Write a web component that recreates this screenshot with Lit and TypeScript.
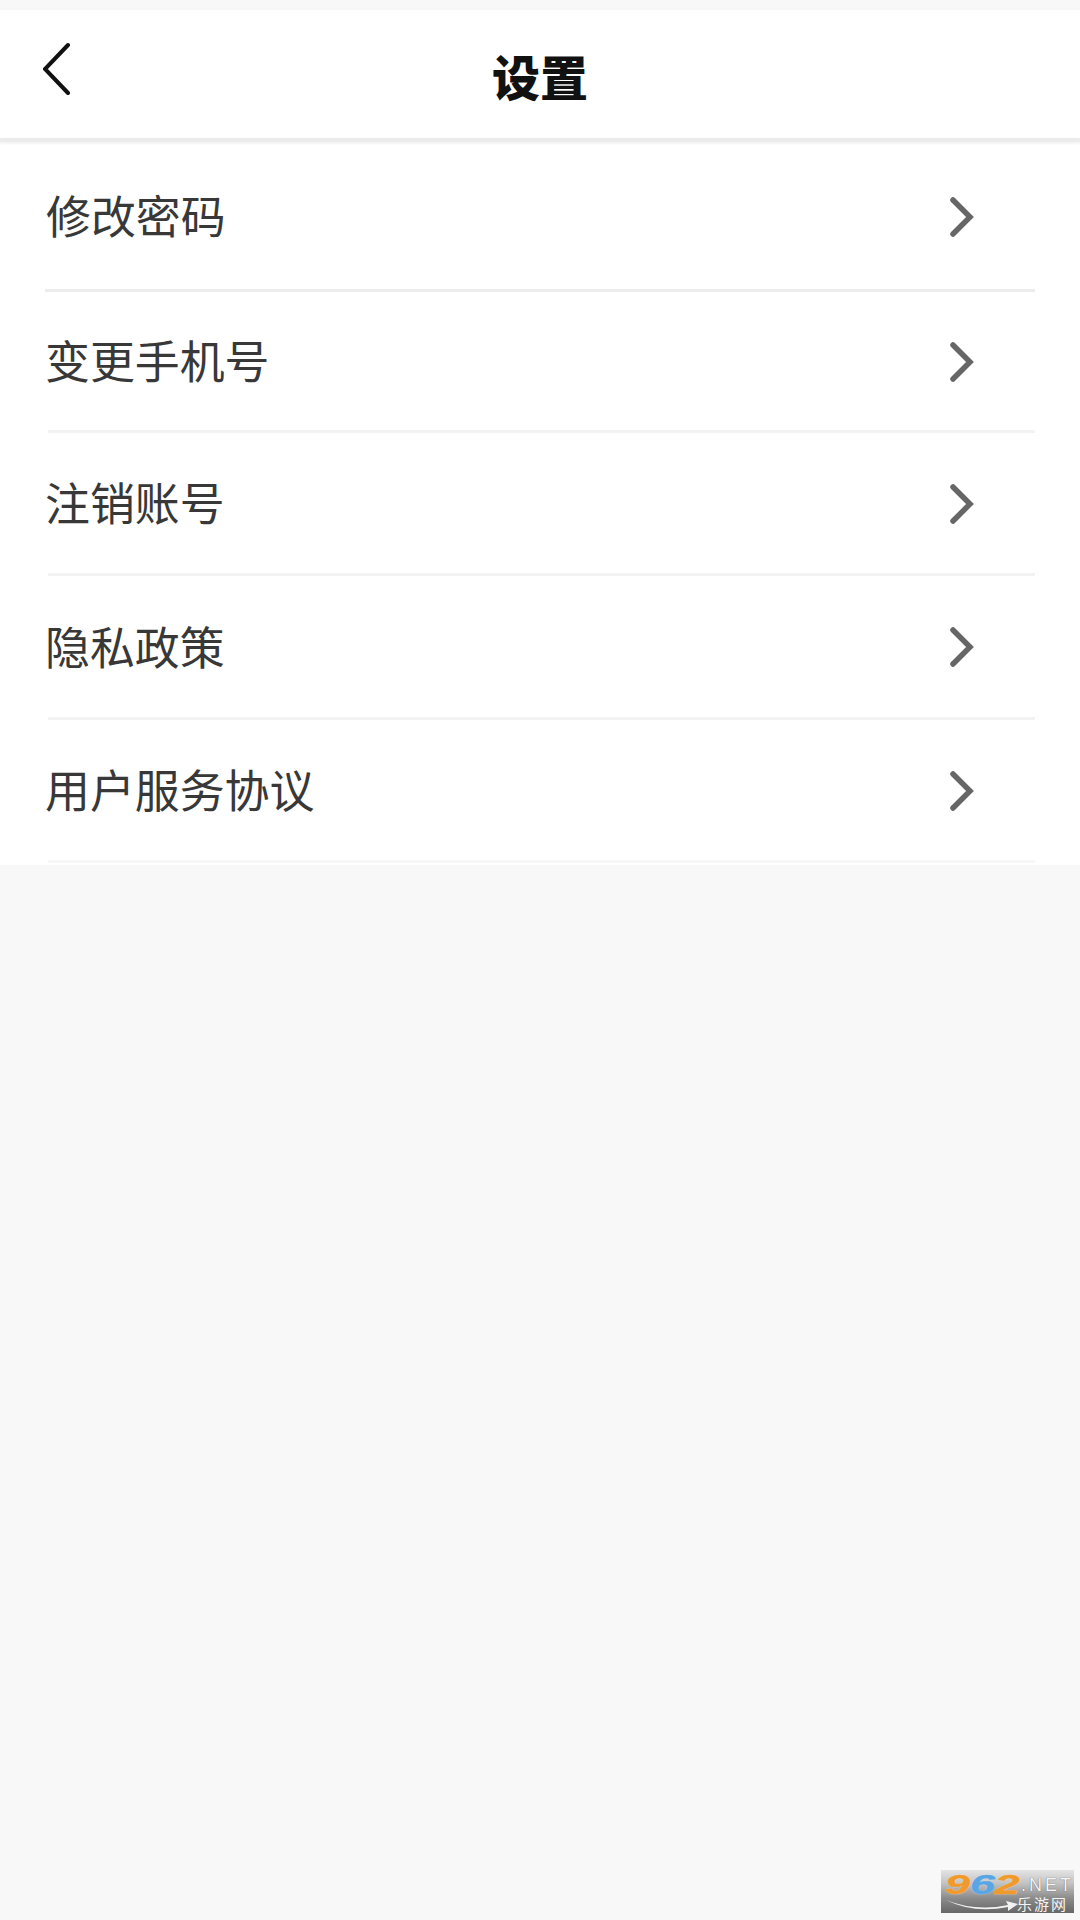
import { LitElement, html, css, svg } from "lit";
import { customElement } from "lit/decorators.js";

const ITEMS = ["修改密码", "变更手机号", "注销账号", "隐私政策", "用户服务协议"];

@customElement("app-root")
export class AppRoot extends LitElement {
  static styles = css`
    :host {
      display: block;
      position: relative;
      width: 1080px;
      height: 1920px;
      overflow: hidden;
      background: #f8f8f8;
      font-family: "Noto Sans CJK SC", "Liberation Sans", sans-serif;
    }
    .page {
      padding-top: 10px;
    }
    .header {
      display: flex;
      align-items: center;
      justify-content: center;
      position: relative;
      height: 128px;
      background: #fff;
      border-bottom: 4px solid #ebebeb;
      box-shadow: 0 2px 2px #f4f4f4;
    }
    .title {
      font-size: 48px;
      font-weight: 900;
      color: #111;
      line-height: 1;
      margin-top: 2px;
    }
    .back {
      position: absolute;
      left: 43px;
      top: 30px;
      width: 30px;
      height: 60px;
    }
    .list {
      background: #fff;
      padding-left: 45px;
      height: 723px;
      box-sizing: border-box;
    }
    .row {
      display: flex;
      align-items: center;
      height: 143.5px;
      box-sizing: border-box;
      margin-left: 3px;
      margin-right: 45px;
      border-bottom: 3px solid #f3f3f3;
    }
    .row:first-child {
      height: 150px;
      margin-left: 0;
      border-bottom-color: #ececec;
    }
    .row:nth-child(2) {
      height: 140.5px;
    }
    .row:last-child {
      border-bottom-color: #f7f7f7;
    }
    .label {
      flex: 1;
      margin-left: -3px;
      font-size: 44.9px;
      line-height: 1;
      color: #383838;
    }
    .row:first-child .label {
      margin-left: 1px;
    }
    .chevron {
      width: 28px;
      height: 44px;
      margin-top: 2px;
      margin-right: 61px;
    }
    .mark {
      position: absolute;
      left: 941px;
      top: 1870px;
      width: 133px;
      height: 43px;
      overflow: hidden;
      background: linear-gradient(#e4e4e4, #c4c4c4 30%, #8c8c8c 65%, #666);
      font-family: "Liberation Sans", sans-serif;
      white-space: nowrap;
    }
    .num {
      position: absolute;
      left: 4px;
      top: 1px;
      font-size: 28px;
      line-height: 1;
      font-weight: 700;
      font-style: italic;
      transform: scaleX(1.6);
      transform-origin: left top;
      -webkit-text-stroke: 0.5px currentColor;
      text-shadow: 0 0 1px #fff;
    }
    .orange {
      color: #f09a2c;
    }
    .blue {
      color: #5aa5e4;
    }
    .net {
      position: absolute;
      left: 80px;
      top: 6px;
      font-size: 18px;
      line-height: 1;
      letter-spacing: 3px;
      color: #f4f4f4;
      text-shadow: 0 0 1px #444;
    }
    .cn {
      position: absolute;
      left: 76px;
      top: 26px;
      font-size: 15px;
      line-height: 1;
      letter-spacing: 2px;
      color: #f4f4f4;
      font-family: "Noto Sans CJK SC", sans-serif;
    }
    .swoosh {
      position: absolute;
      left: 5px;
      top: 29px;
      width: 72px;
      height: 13px;
    }
  `;

  private chevron() {
    return svg`<svg class="chevron" viewBox="0 0 28 44">
      <path d="M7 5 L24 22 L7 39" fill="none" stroke="#666" stroke-width="5.5" stroke-linecap="round" stroke-linejoin="miter" />
    </svg>`;
  }

  render() {
    return html`
      <div class="page">
        <div class="header">
          <svg class="back" viewBox="0 0 30 60">
            <path d="M25 5 L2 29 L25 53" fill="none" stroke="#111" stroke-width="4" stroke-linecap="round" />
          </svg>
          <div class="title">设置</div>
        </div>
        <div class="list">
          ${ITEMS.map(
            (t) => html`<div class="row">
              <div class="label">${t}</div>
              ${this.chevron()}
            </div>`
          )}
        </div>
      </div>
      <div class="mark">
        <svg class="swoosh" viewBox="0 0 72 13">
          <path d="M0 1 Q30 13 62 6 L60 2 L72 5 L62 12 L62 8 Q28 15 0 1 Z" fill="#f2f2f2" />
        </svg>
        <div class="num"><span class="orange">9</span><span class="blue">6</span><span class="orange">2</span></div>
        <div class="net">.NET</div>
        <div class="cn">乐游网</div>
      </div>
    `;
  }
}
